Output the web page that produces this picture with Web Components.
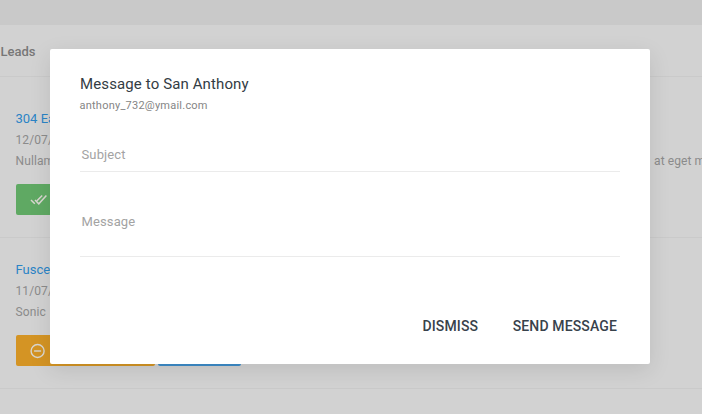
<!DOCTYPE html>
<html lang="en">
<head>
<meta charset="utf-8">
<title>Leads</title>
<style>
html, body { margin: 0; height: 100%; overflow: hidden; }
body { font-family: Roboto, "Noto Sans", sans-serif; background: #d2d2d2; }
</style>
</head>
<body>
<leads-page></leads-page>
<script>
const define = (name, html) => customElements.define(name, class extends HTMLElement {
  constructor() {
    super();
    const t = document.createElement('template');
    t.innerHTML = html;
    this.attachShadow({ mode: 'open' }).append(t.content.cloneNode(true));
  }
});

define('top-bar', `<style>:host{display:block;height:25px;background:#c9c9c9}</style>`);

define('page-heading', `<style>
:host{display:block;box-sizing:border-box;height:52px;padding-left:.5px;border-bottom:1px solid #cacaca;font:500 13px/53px Roboto,sans-serif;color:#777}
</style><slot></slot>`);

define('action-button', `<style>
:host{display:flex;align-items:center;box-sizing:border-box;height:31px;padding-left:14px;border-radius:2px;background:var(--fill);color:#d9d6d0}
</style><slot></slot>`);

define('lead-row', `<style>
:host{display:flex;flex-direction:column;box-sizing:border-box;height:var(--row,151px);padding:var(--top,21px) 0 0 15.5px;border-bottom:1px solid #cacaca;font-size:12px;line-height:21px;letter-spacing:.1px;color:#8b8b8b;white-space:nowrap}
.name{height:22px;font-size:13px;letter-spacing:0;color:#2b84c6}
.text{display:flex;justify-content:space-between}
.actions{display:flex;gap:3px;margin:12px 0 0 .5px}
</style>
<div class="name"><slot name="name"></slot></div>
<div><slot name="date"></slot></div>
<div class="text"><slot name="text"></slot></div>
<div class="actions"><slot name="actions"></slot></div>`);

define('form-field', `<style>
:host{display:block;box-sizing:border-box;height:var(--height);padding:8px 2px 0 1.5px;border-bottom:1px solid #ebebeb;font-size:13px;line-height:18px;letter-spacing:.12px;color:#a3a3a3}
</style><slot></slot>`);

define('text-button', `<style>
:host{display:block;font-size:14px;font-weight:500;line-height:20px;letter-spacing:.14px;color:#38424b}
</style><slot></slot>`);

define('message-dialog', `<style>
:host{position:absolute;left:50px;top:49px;width:600px;height:315px;box-sizing:border-box;padding:25px 30px;border-radius:2px;background:#fff;box-shadow:0 6px 22px rgba(0,0,0,.1)}
.title{font-size:15px;line-height:20px;letter-spacing:.12px;color:#333c44}
.mail{font-size:11px;line-height:16px;margin:4px 0 0 -.5px;letter-spacing:.23px;color:#858585}
.fields{display:flex;flex-direction:column;gap:33px;margin-top:24px}
.buttons{display:flex;justify-content:flex-end;gap:34.5px;margin-top:59px;padding-right:3px}
</style>
<div class="title"><slot name="title"></slot></div>
<div class="mail"><slot name="mail"></slot></div>
<div class="fields"><slot name="fields"></slot></div>
<div class="buttons"><slot name="buttons"></slot></div>`);

define('leads-page', `<style>
:host{display:block;position:relative;width:702px;height:414px;overflow:hidden}
</style>
<top-bar></top-bar>
<page-heading>Leads</page-heading>
<lead-row style="--row:161px;--top:31px">
  <span slot="name">304 Ea</span><span slot="date">12/07/</span><span slot="text">Nullam</span><span slot="text" style="width:48px">at eget m</span>
  <action-button slot="actions" style="--fill:#5fa963;width:80px"><svg width="18" height="14" viewBox="0 0 18 14" fill="none" stroke="currentColor" stroke-width="1.5"><path d="M1 7 4.8 10.8 M5 7 8.8 10.8 16.4 2.4 M12.2 2.4 7 7.8"/></svg></action-button>
</lead-row>
<lead-row>
  <span slot="name">Fusce</span><span slot="date">11/07/</span><span slot="text">Sonic</span>
  <action-button slot="actions" style="--fill:#d49424;width:139px"><svg width="16" height="16" viewBox="0 0 16 16" fill="none" stroke="currentColor" stroke-width="1.4"><circle cx="7.6" cy="8" r="6.5"/><path d="M4.1 8h7"/></svg></action-button>
  <action-button slot="actions" style="--fill:#3d8cc9;width:83px"></action-button>
</lead-row>
<message-dialog>
  <span slot="title">Message to San Anthony</span>
  <span slot="mail">anthony_732@ymail.com</span>
  <form-field slot="fields" style="--height:34px">Subject</form-field>
  <form-field slot="fields" style="--height:52px">Message</form-field>
  <text-button slot="buttons">DISMISS</text-button>
  <text-button slot="buttons">SEND MESSAGE</text-button>
</message-dialog>`);
</script>
</body>
</html>
